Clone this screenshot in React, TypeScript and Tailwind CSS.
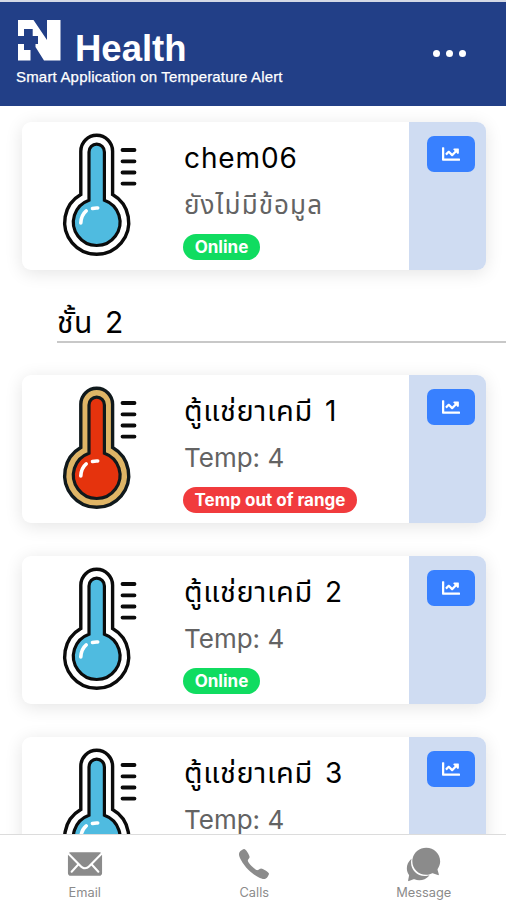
import React from 'react';
import { FaChartLine } from 'react-icons/fa';
import { IoIosMail, IoIosCall, IoIosChatbubbles } from 'react-icons/io';

function Thermometer({ hot = false }: { hot?: boolean }) {
  const line = hot ? '#10191c' : '#0b0b0b';
  return (
    <svg className="block h-[148px] w-[162px] shrink-0" viewBox="0 0 162 148" fill="none">
      <path
        d="M58.8 72.5V29.2a15.9 15.9 0 0 1 31.8 0V72.5a32 32 0 1 1-31.8 0Z"
        fill={hot ? '#dfb566' : '#fff'} stroke={line} strokeWidth="3.4"
      />
      <path
        d="M67 78.2V29.9a7.7 7.7 0 0 1 15.4 0V78.2a23.3 23.3 0 1 1-15.4 0Z"
        fill={hot ? '#e5330d' : '#4fbbe0'} stroke={line} strokeWidth="3.2"
      />
      <path d="M58.8 101c.2-5.5 2.2-9.5 5.4-12.2M70.5 86.5c1.8-.5 3.5-.6 5.2-.5" stroke="#fff" strokeWidth="3.6" strokeLinecap="round" />
      <path d="M100.5 28h12M100.5 39.3h12M100.5 50.5h12M100.5 61.6h12" stroke="#0b0b0b" strokeWidth="3.8" strokeLinecap="round" />
    </svg>
  );
}

interface CardProps {
  title: React.ReactNode;
  reading: React.ReactNode;
  hot?: boolean;
}

function Card({ title, reading, hot }: CardProps) {
  return (
    <section className="flex h-[148px] w-[464px] shrink-0 overflow-hidden rounded-[9px] bg-white shadow-[0_3px_18px_rgba(0,0,0,0.11)]">
      <Thermometer hot={hot} />
      <div className="flex min-w-0 flex-1 flex-col items-start pt-[16px]">
        <h2 className="h-[40px] whitespace-nowrap text-[28px] leading-[40px] text-black">{title}</h2>
        <p className="mt-[7px] h-[40px] whitespace-nowrap text-[26px] leading-[40px] text-[#636363]">{reading}</p>
        <span className={`mt-[9px] -ml-px flex h-[26px] items-center rounded-full text-[17px] leading-[26px] font-bold text-white ${hot ? 'w-[174px] bg-[#f13b3d]' : 'w-[77px] bg-[#10dc60]'} justify-center whitespace-nowrap`}>
          {hot ? 'Temp out of range' : 'Online'}
        </span>
      </div>
      <div className="flex w-[77px] shrink-0 justify-center bg-[#cfdcf2] pt-[14px] pl-[6px]">
        <button className="flex h-[36px] w-[48px] items-center justify-center rounded-[7px] bg-[#3880ff] text-white">
          <FaChartLine size={18} />
        </button>
      </div>
    </section>
  );
}

function CabinetName({ number }: { number: number }) {
  return (
    <span className="flex gap-[12px]">
      <span className="text-[29px] tracking-[0.7px]">ตู้แช่ยาเคมี</span>
      <span>{number}</span>
    </span>
  );
}

function Logo() {
  return (
    <svg className="h-[42px] w-[46px]" viewBox="0 0 46 42" fill="#fff">
      <path d="M2 1h15.500L31 21V1h13.500v40.500H28L19.500 28v-3H22v-8h-5.300v-7H8v7H2Z" />
      <path d="M2 25h6v6h6.500v10.500H2Z" />
    </svg>
  );
}

function Tab({ icon, label }: { icon: React.ReactNode; label: string }) {
  return (
    <div className="flex w-[169.5px] shrink-0 flex-col items-center text-[#8b8b8b]">
      <div className="flex h-[50px] items-center pt-[8px]">{icon}</div>
      <span className="text-[12.8px] leading-[15px]">{label}</span>
    </div>
  );
}

export default function App() {
  return (
    <div className="flex h-[900px] w-[506px] flex-col overflow-hidden bg-white font-[Inter,'Noto_Sans_Thai','Noto_Sans',sans-serif]">
      <header className="flex h-[106px] shrink-0 justify-between border-t-2 border-[#d4d9e6] bg-[#223f87] text-white font-['Liberation_Sans',sans-serif]">
        <div className="pt-[17px] pl-[16px]">
          <div className="flex h-[47px]">
            <Logo />
            <h1 className="pt-[9px] pl-[13px] text-[36.5px] leading-[42px] font-bold">Health</h1>
          </div>
          <p className="whitespace-nowrap text-[15px] leading-[21px] tracking-[0.18px] [-webkit-text-stroke:0.25px_white]">Smart Application on Temperature Alert</p>
        </div>
        <div className="mt-[48px] mr-[40px] flex gap-[6px]">
          <i className="size-[7px] rounded-full bg-white" />
          <i className="size-[7px] rounded-full bg-white" />
          <i className="size-[7px] rounded-full bg-white" />
        </div>
      </header>
      <main className="flex h-[728px] shrink-0 flex-col overflow-hidden pt-[16px] pl-[22px]">
        <Card title={<span className="tracking-[0.9px]">chem06</span>} reading={<span className="tracking-[1.1px]">ยังไม่มีข้อมูล</span>} />
        <div className="mt-[29px] ml-[35px] flex h-[44px] shrink-0 gap-[12px] border-b-2 border-[#c8c8c8] text-[30px] leading-[46px] text-black">
          <span className="tracking-[0.5px]">ชั้น</span>
          <span>2</span>
        </div>
        <div className="mt-[32px] flex flex-col gap-[33px]">
          <Card title={<CabinetName number={1} />} reading="Temp: 4" hot />
          <Card title={<CabinetName number={2} />} reading="Temp: 4" />
          <Card title={<CabinetName number={3} />} reading="Temp: 4" />
        </div>
      </main>
      <footer className="flex h-[66px] shrink-0 border-t border-[#dcdcdc] bg-white">
        <Tab icon={<IoIosMail size={42} />} label="Email" />
        <Tab icon={<IoIosCall size={40} />} label="Calls" />
        <Tab icon={<IoIosChatbubbles size={41} />} label="Message" />
      </footer>
    </div>
  );
}
